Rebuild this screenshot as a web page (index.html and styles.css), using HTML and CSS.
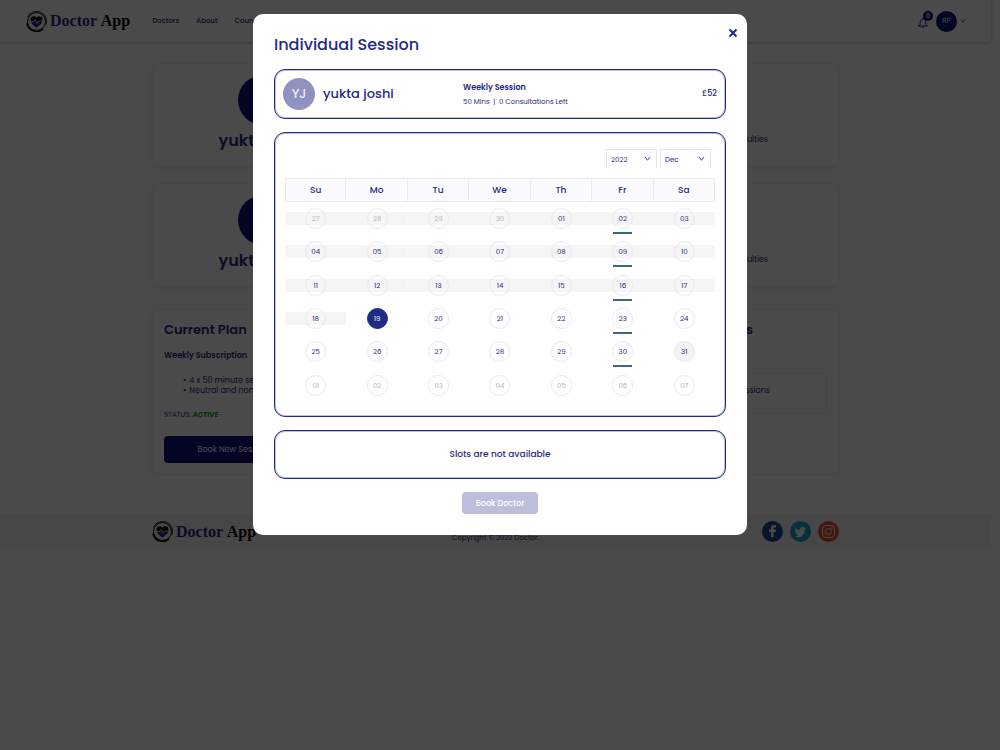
FILE: index.html
```html
<!DOCTYPE html>
<html lang="en">
<head>
  <meta charset="UTF-8">
  <meta name="viewport" content="width=device-width, initial-scale=1">
  <title>Doctor App</title>
  <link rel="stylesheet" href="styles.css">
</head>
<body>

<svg width="0" height="0" class="sprite">
  <symbol id="logo" viewBox="0 0 42 42">
    <circle cx="21" cy="21" r="18" fill="none" stroke="#000" stroke-width="2"/>
    <path d="M3 12A20 20 0 0 1 40 27" fill="none" stroke="#1f2b84" stroke-width="2"/>
    <path d="M2 25A19.500 19.500 0 0 0 34 36" fill="none" stroke="#000" stroke-width="3"/>
    <path d="M21 33C14 28 9 23 9 17c0-7 9-9 12-3 3-6 12-4 12 3 0 6-5 11-12 16z" fill="#000"/>
    <path d="M21 33C16 29 12 26 10 22h6l2-4 4 8 3-5h8c-2 4-7 8-12 12z" fill="#1f2b84"/>
    <path d="M9 21h7l2-4 4 8 3-5h8" fill="none" stroke="#fff" stroke-width="1.500"/>
  </symbol>
  <symbol id="chevron" viewBox="0 0 10 10">
    <path d="M1.500 2.500L5 7.500l3.500-5" fill="none" stroke="currentColor" stroke-width="1.200"/>
  </symbol>
</svg>

<header class="topbar">
  <a class="logo" href="#"><svg><use href="#logo"/></svg><span>Doctor <b>App</b></span></a>
  <nav>
    <a href="#">Doctors</a>
    <a href="#">About</a>
    <a href="#">Counselling</a>
  </nav>
  <div class="account">
    <button class="bell" aria-label="Notifications">
      <svg viewBox="0 0 24 24"><path d="M2 20h20M5 20c2-3 1-6 2-10 1-3 3-4 5-4s4 1 5 4c1 4 0 7 2 10M12 6V3M10 23h4" fill="none" stroke="#1f2b84" stroke-width="2"/></svg>
      <span class="badge">0</span>
    </button>
    <button class="user">RP</button>
    <svg class="caret"><use href="#chevron"/></svg>
  </div>
</header>

<main class="page">
  <section class="card doctor">
    <div class="who"><span class="avatar">YJ</span><h2>yukta joshi</h2></div>
    <p>Difficulties</p>
  </section>
  <section class="card doctor">
    <div class="who"><span class="avatar">YJ</span><h2>yukta joshi</h2></div>
    <p>Difficulties</p>
  </section>
  <div class="plans">
    <section class="card plan">
      <h3>Current Plan</h3>
      <h4>Weekly Subscription</h4>
      <ul>
        <li>4 x 50 minute sessions</li>
        <li>Neutral and nonjudgemental</li>
      </ul>
      <p>STATUS: <em>ACTIVE</em></p>
      <button>Book New Session</button>
    </section>
    <section class="card upcoming">
      <h3>Sessions</h3>
      <p>No sessions</p>
    </section>
  </div>
</main>

<footer class="footer">
  <div class="footer-inner">
    <a class="logo" href="#"><svg><use href="#logo"/></svg><span>Doctor <b>App</b></span></a>
    <small>Copyright © 2022 Doctor.</small>
    <div class="social">
      <a href="#" aria-label="Facebook"><svg viewBox="0 0 42 42"><circle cx="21" cy="21" r="21" fill="#1c4b94"/><path d="M18 32V22h-4v-5h4v-3c0-4 2-6 6-6h4v5h-3c-2 0-2 1-2 2v2h5l-1 5h-4v10z" fill="#fff"/></svg></a>
      <a href="#" aria-label="Twitter"><svg viewBox="0 0 42 42"><circle cx="21" cy="21" r="21" fill="#1aa5d8"/><path d="M32 14l-3 1c1-1 2-2 2-3l-3 1c-4-4-9 0-8 5-4 0-7-2-9-5-1 2-1 5 1 7l-2-1c0 3 1 5 4 6h-2c1 2 3 3 5 3-2 2-5 2-7 2 9 6 20 0 19-13z" fill="#fff"/></svg></a>
      <a href="#" aria-label="Instagram"><svg viewBox="0 0 42 42"><circle cx="21" cy="21" r="21" fill="#f0532d"/><g fill="none" stroke="#fff" stroke-width="2"><rect x="9" y="9" width="24" height="24" rx="7"/><circle cx="21" cy="21" r="6"/></g><circle cx="28" cy="14" r="1.500" fill="#fff"/></svg></a>
    </div>
  </div>
</footer>

<div class="overlay">
  <div class="modal" role="dialog" aria-labelledby="modalTitle">
    <button class="close" aria-label="Close"><svg viewBox="0 0 10 10"><path d="M1.500 1.500l7 7M8.500 1.500l-7 7" stroke="currentColor" stroke-width="2"/></svg></button>
    <h1 id="modalTitle">Individual Session</h1>

    <section class="box summary">
      <div class="person"><span>YJ</span>yukta joshi</div>
      <div class="session">
        <strong>Weekly Session</strong>
        <span>50 Mins &nbsp;|&nbsp; 0 Consultations Left</span>
      </div>
      <div class="price">£52</div>
    </section>

    <section class="box calendar">
      <div class="pickers">
        <div class="picker">
          <select aria-label="Year"><option>2022</option><option>2023</option></select>
          <svg><use href="#chevron"/></svg>
        </div>
        <div class="picker">
          <select aria-label="Month"><option>Dec</option><option>Jan</option></select>
          <svg><use href="#chevron"/></svg>
        </div>
      </div>
      <table>
        <thead>
          <tr><th>Su</th><th>Mo</th><th>Tu</th><th>We</th><th>Th</th><th>Fr</th><th>Sa</th></tr>
        </thead>
        <tbody id="dates"></tbody>
      </table>
    </section>

    <section class="box slots">Slots are not available</section>
    <button class="book" disabled>Book Doctor</button>
  </div>
</div>

<script>
  const dates = document.getElementById("dates");
  const start = new Date(2022, 10, 27);
  const today = new Date(2022, 11, 19);

  let html = "";
  for (let week = 0; week < 6; week++) {
    html += "<tr>";
    for (let d = 0; d < 7; d++) {
      const day = new Date(2022, 10, start.getDate() + week * 7 + d);
      const inMonth = day.getMonth() === 11;
      const classes = [];
      if (!inMonth) classes.push("other-month");
      if (day < today) classes.push("past");
      if (day.getTime() === today.getTime()) classes.push("selected");
      if (inMonth && d === 5) classes.push("session-day");
      if (inMonth && day.getDate() === 31) classes.push("hovered");
      const label = String(day.getDate()).padStart(2, "0");
      html += `<td class="${classes.join(" ")}"><span>${label}</span></td>`;
    }
    html += "</tr>";
  }
  dates.innerHTML = html;
</script>

</body>
</html>
```
FILE: styles.css
```css
* {
  box-sizing: border-box;
}

body {
  margin: 0;
  padding-right: 9px;
  background: #fff;
  color: #1f2b84;
  font-family: Poppins, Inter, sans-serif;
  font-size: 8px;
  line-height: 12px;
}

h1, h2, h3, h4, p, ul {
  margin: 0;
  padding: 0;
}

a {
  color: inherit;
  text-decoration: none;
}

button {
  border: 0;
  padding: 0;
  font: inherit;
  color: inherit;
  background: none;
}

.sprite {
  position: absolute;
}

.logo {
  display: flex;
  align-items: center;
  gap: 3px;
  font: bold 16px/20px "Liberation Serif", serif;
}

.logo svg {
  width: 21px;
  height: 21px;
}

.logo b {
  color: #000;
}

/* header */
.topbar {
  display: flex;
  align-items: center;
  height: 42px;
  padding: 0 25px 0 26px;
  box-shadow: 0 1px 4px rgba(0, 0, 0, 0.2);
}

.topbar nav {
  display: flex;
  gap: 17px;
  margin-left: 22px;
  font-size: 7px;
  font-weight: 500;
}

.account {
  display: flex;
  align-items: center;
  gap: 3px;
  margin-left: auto;
}

.bell {
  position: relative;
  width: 16px;
  height: 16px;
}

.bell svg {
  display: block;
  width: 12px;
  height: 14px;
  margin-top: 2px;
}

.badge {
  position: absolute;
  top: -2px;
  right: 0;
  width: 10px;
  height: 10px;
  border-radius: 50%;
  background: #101080;
  color: #fff;
  font-size: 6px;
  font-weight: 600;
  line-height: 10px;
}

.user {
  width: 21px;
  height: 21px;
  border-radius: 50%;
  background: #101080;
  color: #fff;
  font-size: 7px;
}

.caret {
  width: 6px;
  height: 6px;
}

/* page behind the modal */
.page {
  width: 70%;
  max-width: 687px;
  margin: 21px auto 0;
}

.card {
  border: 1px solid #f4f4f4;
  border-radius: 5px;
  box-shadow: 0 1px 4px rgba(0, 0, 0, 0.08);
}

.doctor {
  display: flex;
  justify-content: space-between;
  height: 104px;
  margin-bottom: 16px;
  padding: 11px 70px 0 0;
}

.who {
  width: 220px;
  text-align: center;
}

.who h2 {
  margin-top: 4px;
  font-size: 16px;
  font-weight: 600;
  line-height: 24px;
}

.avatar {
  display: block;
  width: 50px;
  height: 50px;
  margin: 0 auto;
  border-radius: 50%;
  background: #101080;
  color: #fff;
  font-size: 18px;
  line-height: 50px;
}

.doctor p {
  margin-top: 59px;
}

.plans {
  display: grid;
  grid-template-columns: 1fr 1fr;
  gap: 16px;
  margin-top: 22px;
}

.plans .card {
  height: 165px;
  padding: 11px 11px 10px;
}

.plans h3 {
  font-size: 13px;
  font-weight: 600;
  line-height: 18px;
}

.plan h4 {
  margin-top: 11px;
  font-size: 8px;
  font-weight: 600;
  line-height: 12px;
}

.plan ul {
  margin: 14px 0 0 19px;
  list-style: none;
  line-height: 10px;
}

.plan li::before {
  content: "•";
  margin-right: 3px;
}

.plan p {
  margin-top: 13px;
  font-size: 7px;
}

.plan em {
  color: #00a814;
  font-weight: 700;
}

.plan button {
  width: 138px;
  height: 27px;
  margin-top: 15px;
  border-radius: 4px;
  background: #101080;
  color: #fff;
}

.upcoming {
  text-align: right;
}

.upcoming h3 {
  margin-right: 74px;
}

.upcoming p {
  height: 41px;
  margin-top: 34px;
  padding: 11px 56px 0 0;
  border: 1px solid #f0f0f0;
  border-radius: 4px;
}

/* footer */
.footer {
  margin-top: 40px;
  background: #f4f4f4;
}

.footer-inner {
  display: grid;
  grid-template-columns: 1fr auto 1fr;
  align-items: center;
  width: 70%;
  max-width: 687px;
  height: 35px;
  margin: 0 auto;
}

.footer small {
  padding-top: 12px;
  font-size: 7px;
}

.social {
  display: flex;
  justify-content: flex-end;
  gap: 7px;
}

.social svg {
  display: block;
  width: 21px;
  height: 21px;
}

/* modal */
.overlay {
  position: fixed;
  inset: 0;
  overflow: auto;
  padding-top: 14px;
  background: rgba(0, 0, 0, 0.71);
}

.modal {
  position: relative;
  width: 94%;
  max-width: 494px;
  margin: 0 auto;
  padding: 21px;
  border-radius: 10px;
  background: #fff;
}

.modal h1 {
  margin-bottom: 14px;
  font-size: 16px;
  font-weight: 500;
  line-height: 20px;
}

.close {
  position: absolute;
  top: 14px;
  right: 9px;
  width: 10px;
  height: 10px;
}

.close svg {
  display: block;
}

.box {
  margin-bottom: 13px;
  border: 1px solid #1f2b84;
  border-radius: 11px;
  box-shadow: inset 0 0 0 1px rgba(31, 43, 132, 0.3);
}

.summary {
  display: grid;
  grid-template-columns: 180px 1fr auto;
  align-items: center;
  height: 50px;
  padding: 0 8px;
}

.person {
  display: flex;
  align-items: center;
  gap: 8px;
  font-size: 13px;
  font-weight: 500;
}

.person span {
  width: 32px;
  height: 32px;
  border-radius: 50%;
  background: #9092c0;
  color: #fff;
  font-weight: 400;
  line-height: 32px;
  text-align: center;
}

.session {
  padding-top: 1px;
}

.session strong,
.session span {
  display: block;
  line-height: 14px;
}

.session strong {
  font-weight: 600;
}

.session span {
  font-size: 7px;
}

.price {
  font-size: 8px;
  font-weight: 500;
}

.calendar {
  height: 285px;
  padding: 16px 10px;
}

.pickers {
  display: flex;
  justify-content: flex-end;
  gap: 3px;
  padding-right: 4px;
}

.picker {
  position: relative;
  width: 51px;
}

.picker select {
  display: block;
  width: 100%;
  height: 19px;
  padding: 1px 4px 0;
  border: 1px solid #e3e3e8;
  border-bottom: 0;
  border-radius: 1px 1px 0 0;
  background: #fff;
  color: inherit;
  font: inherit;
  font-size: 7px;
  appearance: none;
}

.picker svg {
  position: absolute;
  top: 6px;
  right: 6px;
  width: 7px;
  height: 7px;
  pointer-events: none;
}

.calendar table {
  width: 100%;
  height: 224px;
  margin-top: 10px;
  border-collapse: separate;
  border-spacing: 0;
  table-layout: fixed;
}

.calendar th {
  height: 24px;
  padding: 0;
  border: solid #e9e8f3;
  border-width: 1px 1px 1px 0;
  background: #fafaff;
  font-size: 9px;
  font-weight: 500;
}

.calendar th:first-child {
  border-left-width: 1px;
}

.calendar td {
  padding: 0;
  font-size: 7px;
  text-align: center;
}

.calendar td span {
  position: relative;
  display: block;
  width: 21px;
  height: 21px;
  margin: 0 auto;
  border: 1px solid #e8e7f4;
  border-radius: 50%;
  line-height: 20px;
}

.past {
  background: linear-gradient(#f5f5f5, #f5f5f5) center / 100% 13px no-repeat;
}

.other-month {
  color: #b5b5b5;
}

.calendar .selected span {
  border-color: #1f2b84;
  background: #1f2b84;
  color: #fff;
}

.calendar .hovered span {
  background: #f3f3f3;
}

/* line under days with a session */
.session-day span::after {
  content: "";
  position: absolute;
  left: 0;
  right: 0;
  bottom: -6px;
  height: 2px;
  background: #3c6878;
}

.slots {
  height: 49px;
  font-size: 9px;
  font-weight: 500;
  line-height: 47px;
  text-align: center;
}

.book {
  display: block;
  width: 76px;
  height: 22px;
  margin: 0 auto;
  padding-top: 1px;
  border-radius: 4px;
  background: #bcbedb;
  color: #fff;
  font-weight: 500;
}
```
